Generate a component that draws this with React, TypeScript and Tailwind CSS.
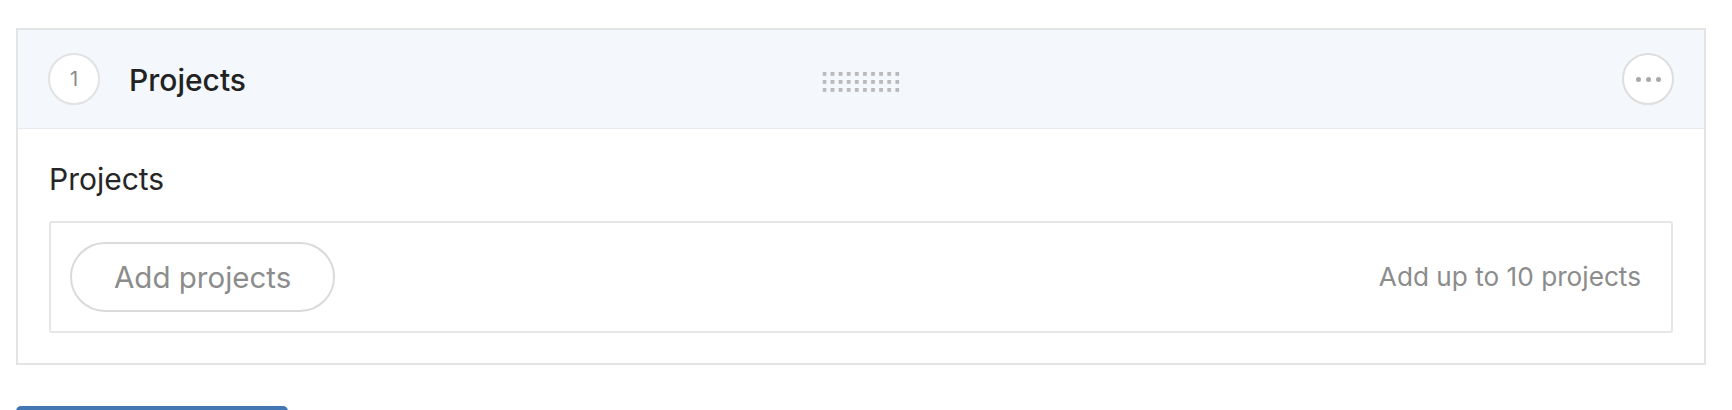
import React from "react";

const DragHandle = () => {
  const dots = [];
  for (let r = 0; r < 3; r++) {
    for (let c = 0; c < 10; c++) {
      dots.push(<rect key={`${r}-${c}`} x={c * 8.1} y={r * 8} width={3.8} height={3.8} fill="#b9b9b9" />);
    }
  }
  return (
    <svg width="77" height="20" viewBox="0 0 77 20" className="block">
      {dots}
    </svg>
  );
};

export default function App() {
  return (
    <div
      className="h-[410px] bg-white pl-4 pr-[26px] pt-7 overflow-hidden"
      style={{ fontFamily: "Inter, 'Noto Sans', sans-serif" }}
    >
      <div className="border-2 border-[#e4e4e4] bg-white">
        {/* header */}
        <div className="relative flex items-center h-[99px] bg-[#f4f7fc] border-b border-[#e6e9ee] pl-[30px] pr-[30px]">
          <div className="flex items-center justify-center w-[52px] h-[52px] rounded-full border-2 border-[#e2e2e2] bg-white text-[20px] text-[#8a8a8a]">
            1
          </div>
          <div className="ml-[29px] text-[30px] font-medium text-[#222222] pt-[2px]">
            Projects
          </div>
          <div className="absolute left-1/2 top-[42px] -translate-x-1/2">
            <DragHandle />
          </div>
          <div className="ml-auto flex items-center justify-center gap-[5px] w-[52px] h-[52px] rounded-full border-2 border-[#dedede] bg-white">
            <span className="w-[5px] h-[5px] rounded-full bg-[#a9a9a9]" />
            <span className="w-[5px] h-[5px] rounded-full bg-[#a9a9a9]" />
            <span className="w-[5px] h-[5px] rounded-full bg-[#a9a9a9]" />
          </div>
        </div>

        {/* body */}
        <div className="pt-[33px] pb-[30px] px-[31px]">
          <div className="text-[30px] leading-[34px] text-[#262626]">Projects</div>
          <div className="mt-[25px] flex items-center justify-between h-[112px] border-2 border-[#e6e6e6] rounded-[3px] pl-[19px] pr-[30px]">
            <button className="h-[70px] px-[42px] rounded-full border-2 border-[#dadada] bg-white text-[29.5px] text-[#8c8c8c]">
              Add projects
            </button>
            <div className="text-[26.2px] text-[#8c8c8c]">Add up to 10 projects</div>
          </div>
        </div>
      </div>

      <div className="mt-[41px] w-[272px] h-[40px] rounded-t-[5px] bg-[#4277b3]" />
    </div>
  );
}
